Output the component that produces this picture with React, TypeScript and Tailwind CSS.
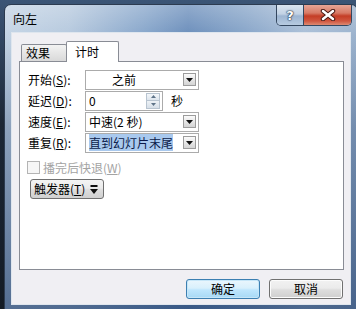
import React from "react";

function DropBtn() {
  return (
    <div className="w-[13px] h-[13px] border border-[#9c9c9c] bg-gradient-to-b from-[#fbfbfb] to-[#d4d4d4] flex items-center justify-center shrink-0">
      <svg width="7" height="4" viewBox="0 0 7 4">
        <path d="M0 0h7L3.5 4z" fill="#111" />
      </svg>
    </div>
  );
}

function Combo({ children, pl = "pl-[3px]" }: { children: React.ReactNode; pl?: string }) {
  return (
    <div className={`w-[114px] h-[20px] border border-[#ababab] bg-white flex items-center justify-between pr-[2px] ${pl}`}>
      <div className="text-[12px] leading-[14px] text-black whitespace-nowrap">{children}</div>
      <DropBtn />
    </div>
  );
}

function Label({ text, k }: { text: string; k: string }) {
  return (
    <div className="w-[57px] text-[12px] leading-[14px] text-black whitespace-nowrap">
      {text}(<span className="underline">{k}</span>):
    </div>
  );
}

export default function App() {
  return (
    <div className="w-[356px] h-[309px] overflow-hidden bg-[linear-gradient(180deg,#3b5576_0%,#1c2736_40%,#141b25_100%)] pt-[4px] pl-[4px] font-['Noto_Sans_CJK_SC','Noto_Sans',sans-serif]">
      <div className="w-[354px] h-[310px] rounded-t-[7px] border border-[#2c3b50] flex flex-col bg-[linear-gradient(180deg,rgba(255,255,255,0.25)_0%,rgba(255,255,255,0)_10%,rgba(40,70,115,0.35)_40%,rgba(35,65,110,0.7)_100%),linear-gradient(90deg,#c4d4e5_0%,#b6c9de_18%,#86a5ca_40%,#6b8ebb_52%,#86a4c8_68%,#a9bed7_85%,#9bb2cd_100%)]">
        {/* title bar */}
        <div className="h-[27px] flex justify-between items-start">
          <div className="pl-[8px] pt-[6px] text-[12px] leading-[16px] text-black">向左</div>
          <div className="mr-[5px] flex rounded-b-[5px] border border-t-0 border-[#34475f] overflow-hidden">
            <div className="w-[27px] h-[20px] bg-[linear-gradient(180deg,#dbe5f0_0%,#c2d2e4_45%,#9db5d2_55%,#b7cbe0_100%)] border-r border-[#34475f] flex items-center justify-center">
              <span className="text-white font-bold text-[13px] leading-none [text-shadow:0_0_1px_#1c2c44,0_0_1px_#1c2c44,0_0_2px_#1c2c44] font-['DejaVu_Sans',sans-serif]">?</span>
            </div>
            <div className="w-[47px] h-[20px] bg-[linear-gradient(180deg,#e8a595_0%,#d77a66_40%,#c43d26_55%,#d0563f_80%,#dd8a72_100%)] flex items-center justify-center">
              <svg width="16" height="12" viewBox="0 0 16 12">
                <path d="M3 2L13 10M13 2L3 10" stroke="#4a1a14" strokeWidth="4.5" strokeLinecap="round" />
                <path d="M3 2L13 10M13 2L3 10" stroke="#fff" strokeWidth="2.5" strokeLinecap="round" />
              </svg>
            </div>
          </div>
        </div>

        {/* client area */}
        <div className="mx-[6px] h-[273px] bg-[#f0eff3] border border-[#dfe6ee] flex flex-col">
          {/* tabs */}
          <div className="pt-[7px] pl-[7px] flex items-end h-[28px]">
            <div className="ml-[2px] w-[46px] h-[17px] border border-b-0 border-[#898c95] rounded-t-[2px] bg-gradient-to-b from-[#f3f3f3] to-[#d9d9d9] flex items-center pl-[4px] text-[12px] leading-[14px] text-black">
              效果
            </div>
            <div className="relative z-10 -mb-px -ml-px w-[53px] h-[21px] border border-b-0 border-[#898c95] rounded-t-[2px] bg-white flex items-start pt-[3px] pl-[8px] text-[12px] leading-[14px] text-black">
              计时
            </div>
          </div>

          {/* panel */}
          <div className="ml-[7px] w-[325px] h-[209px] border border-[#898c95] bg-white pt-[7px] pl-[8px] flex flex-col">
            <div className="flex flex-col">
              <div className="h-[21px] flex items-center">
                <Label text="开始" k="S" />
                <Combo pl="pl-[26px]">之前</Combo>
              </div>
              <div className="h-[21px] flex items-center">
                <Label text="延迟" k="D" />
                <div className="w-[78px] h-[20px] border border-[#ababab] bg-white flex items-center justify-between pl-[3px] pr-[2px]">
                  <span className="text-[12px] leading-[14px] text-black">0</span>
                  <div className="w-[14px] h-[16px] flex flex-col border border-[#b8c4d0]">
                    <div className="flex-1 bg-gradient-to-b from-[#f4f7fa] to-[#dde5ed] border-b border-[#b8c4d0] flex items-center justify-center">
                      <svg width="5" height="3" viewBox="0 0 5 3"><path d="M0 3h5L2.5 0z" fill="#5e7388" /></svg>
                    </div>
                    <div className="flex-1 bg-gradient-to-b from-[#eef2f6] to-[#d6dfe8] flex items-center justify-center">
                      <svg width="5" height="3" viewBox="0 0 5 3"><path d="M0 0h5L2.5 3z" fill="#5e7388" /></svg>
                    </div>
                  </div>
                </div>
                <span className="ml-[8px] text-[12px] leading-[14px] text-black">秒</span>
              </div>
              <div className="h-[21px] flex items-center">
                <Label text="速度" k="E" />
                <Combo>中速(2 秒)</Combo>
              </div>
              <div className="h-[21px] flex items-center">
                <Label text="重复" k="R" />
                <Combo>
                  <span className="bg-[#a9c9ee] text-[#0b1a4a]">直到幻灯片末尾</span>
                </Combo>
              </div>
            </div>

            <div className="mt-[8px] -ml-px flex items-center h-[13px]">
              <div className="w-[13px] h-[13px] border border-[#b4b4b4] bg-[#f6f6f6]" />
              <span className="ml-[3px] text-[12px] leading-[14px] text-[#a3a3a3] whitespace-nowrap">
                播完后快退(<span className="underline">W</span>)
              </span>
            </div>

            <div className="mt-[5px] ml-[2px] w-[74px] h-[20px] rounded-[3px] border border-[#707070] bg-[linear-gradient(180deg,#f4f4f4_0%,#ebebeb_45%,#dddddd_55%,#d0d0d0_100%)] flex items-center pl-[3px] gap-[5px]">
              <span className="text-[12px] leading-[14px] text-black whitespace-nowrap">
                触发器(<span className="underline">T</span>)
              </span>
              <svg width="8" height="9" viewBox="0 0 8 9">
                <rect x="0.5" y="0" width="7" height="2" fill="#111" />
                <path d="M0 4h8L4 9z" fill="#111" />
              </svg>
            </div>
          </div>

          {/* buttons */}
          <div className="mt-[9px] pr-[7px] flex justify-end gap-[9px]">
            <div className="w-[74px] h-[20px] rounded-[3px] border border-[#3c7fb1] bg-[linear-gradient(180deg,#eaf6fd_0%,#d9f0fc_45%,#bee6fd_55%,#a7d9f5_100%)] shadow-[inset_0_0_0_1px_#c6e6f8] flex items-center justify-center text-[12px] leading-[14px] text-black">
              确定
            </div>
            <div className="w-[74px] h-[20px] rounded-[3px] border border-[#707070] bg-[linear-gradient(180deg,#f2f2f2_0%,#ebebeb_45%,#dddddd_55%,#cfcfcf_100%)] shadow-[inset_0_0_0_1px_#fcfcfc] flex items-center justify-center text-[12px] leading-[14px] text-black">
              取消
            </div>
          </div>
        </div>
      </div>
    </div>
  );
}
